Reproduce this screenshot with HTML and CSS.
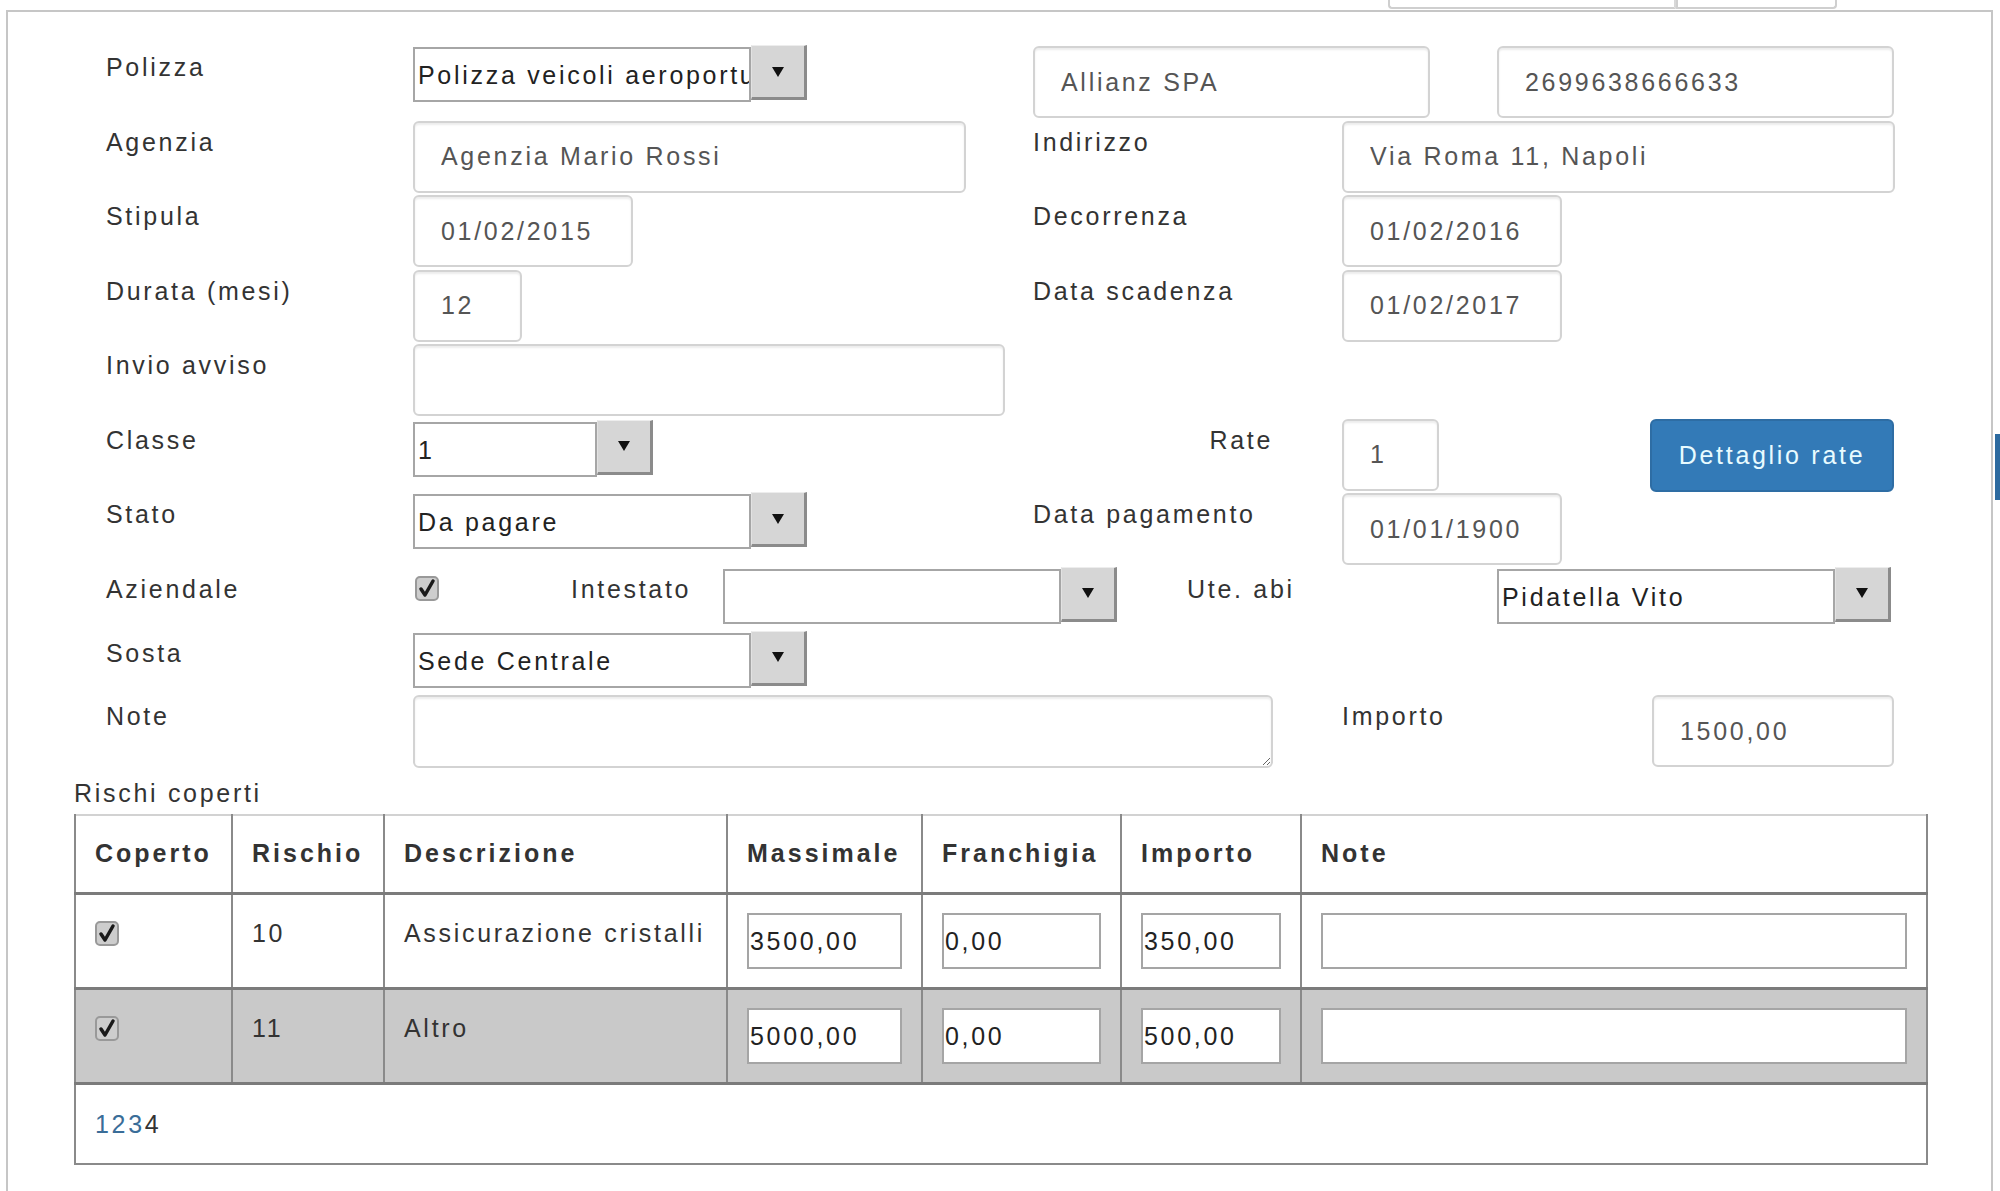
FILE: index.html
```html
<!DOCTYPE html>
<html lang="it">
<head>
    <meta charset="UTF-8">
    <title>Polizza - dettaglio</title>
    <link rel="stylesheet" href="styles.css">
</head>
<body>
    <div class="top-strip">
        <span class="top-box top-box-wide"></span>
        <span class="top-box"></span>
    </div>
    <div class="panel">
        <div class="form">
            <div class="row">
                <label class="lbl">Polizza</label>
                <div class="left-field">
                    <div class="select select-wide"><span class="select-value">Polizza veicoli aeroportuali</span><span class="select-btn"></span></div>
                </div>
                <input class="input w-md" type="text" value="Allianz SPA">
                <input class="input w-md push" type="text" value="2699638666633">
            </div>
            <div class="row">
                <label class="lbl">Agenzia</label>
                <div class="left-field">
                    <input class="input w-lg" type="text" value="Agenzia Mario Rossi">
                </div>
                <label class="right-lbl">Indirizzo</label>
                <input class="input w-lg push" type="text" value="Via Roma 11, Napoli">
            </div>
            <div class="row">
                <label class="lbl">Stipula</label>
                <div class="left-field">
                    <input class="input w-sm" type="text" value="01/02/2015">
                </div>
                <label class="right-lbl">Decorrenza</label>
                <input class="input w-sm" type="text" value="01/02/2016">
            </div>
            <div class="row">
                <label class="lbl">Durata (mesi)</label>
                <div class="left-field">
                    <input class="input w-xs" type="text" value="12">
                </div>
                <label class="right-lbl">Data scadenza</label>
                <input class="input w-sm" type="text" value="01/02/2017">
            </div>
            <div class="row">
                <label class="lbl">Invio avviso</label>
                <input class="input w-xl" type="text" value="">
            </div>
            <div class="row">
                <label class="lbl">Classe</label>
                <div class="left-field">
                    <div class="select select-narrow select-low"><span class="select-value">1</span><span class="select-btn"></span></div>
                </div>
                <label class="right-lbl align-right">Rate</label>
                <input class="input w-xxs" type="text" value="1">
                <button class="btn-primary push" type="button">Dettaglio rate</button>
            </div>
            <div class="row">
                <label class="lbl">Stato</label>
                <div class="left-field">
                    <div class="select select-wide"><span class="select-value">Da pagare</span><span class="select-btn"></span></div>
                </div>
                <label class="right-lbl">Data pagamento</label>
                <input class="input w-sm" type="text" value="01/01/1900">
            </div>
            <div class="row row-sel">
                <label class="lbl">Aziendale</label>
                <div class="check-field">
                    <svg class="check" width="24" height="25" viewBox="0 0 24 25"><rect x="1" y="1" width="22" height="23" rx="4" fill="#cdcdcd" stroke="#999" stroke-width="2"/><path d="M6 13 L10 19 L18 5" fill="none" stroke="#1a1a1a" stroke-width="3.5" stroke-linecap="round" stroke-linejoin="round"/></svg>
                </div>
                <label class="inline-lbl lbl-intestato">Intestato</label>
                <div class="select select-wide"><span class="select-value"></span><span class="select-btn"></span></div>
                <label class="inline-lbl lbl-ute">Ute. abi</label>
                <div class="select select-wide"><span class="select-value">Pidatella Vito</span><span class="select-btn"></span></div>
            </div>
            <div class="row row-sel2">
                <label class="lbl">Sosta</label>
                <div class="select select-wide"><span class="select-value">Sede Centrale</span><span class="select-btn"></span></div>
            </div>
            <div class="row">
                <label class="lbl">Note</label>
                <textarea class="input textarea"></textarea>
                <label class="inline-lbl lbl-importo">Importo</label>
                <input class="input w-amount push" type="text" value="1500,00">
            </div>
        </div>

        <div class="section-title">Rischi coperti</div>
        <table class="risks">
            <colgroup>
                <col style="width: 157px">
                <col style="width: 152px">
                <col style="width: 343px">
                <col style="width: 195px">
                <col style="width: 199px">
                <col style="width: 180px">
                <col style="width: 626px">
            </colgroup>
            <thead>
                <tr>
                    <th>Coperto</th>
                    <th>Rischio</th>
                    <th>Descrizione</th>
                    <th>Massimale</th>
                    <th>Franchigia</th>
                    <th>Importo</th>
                    <th>Note</th>
                </tr>
            </thead>
            <tbody>
                <tr>
                    <td><svg class="check" width="24" height="25" viewBox="0 0 24 25"><rect x="1" y="1" width="22" height="23" rx="4" fill="#cdcdcd" stroke="#999" stroke-width="2"/><path d="M6 13 L10 19 L18 5" fill="none" stroke="#1a1a1a" stroke-width="3.5" stroke-linecap="round" stroke-linejoin="round"/></svg></td>
                    <td>10</td>
                    <td>Assicurazione cristalli</td>
                    <td><input class="cell-input" type="text" value="3500,00"></td>
                    <td><input class="cell-input" type="text" value="0,00"></td>
                    <td><input class="cell-input" type="text" value="350,00"></td>
                    <td><input class="cell-input" type="text" value=""></td>
                </tr>
                <tr class="alt">
                    <td><svg class="check" width="24" height="25" viewBox="0 0 24 25"><rect x="1" y="1" width="22" height="23" rx="4" fill="#cdcdcd" stroke="#999" stroke-width="2"/><path d="M6 13 L10 19 L18 5" fill="none" stroke="#1a1a1a" stroke-width="3.5" stroke-linecap="round" stroke-linejoin="round"/></svg></td>
                    <td>11</td>
                    <td>Altro</td>
                    <td><input class="cell-input" type="text" value="5000,00"></td>
                    <td><input class="cell-input" type="text" value="0,00"></td>
                    <td><input class="cell-input" type="text" value="500,00"></td>
                    <td><input class="cell-input" type="text" value=""></td>
                </tr>
                <tr class="pager">
                    <td colspan="7"><a class="page-link" href="#">1</a><a class="page-link" href="#">2</a><a class="page-link" href="#">3</a><span>4</span></td>
                </tr>
            </tbody>
        </table>
    </div>
</body>
</html>
```

FILE: styles.css
```css
* {
    box-sizing: border-box;
}
body {
    margin: 0;
    font-family: "Liberation Sans", Arial, sans-serif;
    font-size: 25px;
    letter-spacing: 2.7px;
    color: #333;
    background: linear-gradient(#2c6aa0, #2c6aa0) 1995px 434px / 5px 66px no-repeat, #fff;
    overflow: hidden;
}
.top-strip {
    height: 10px;
    display: flex;
    justify-content: flex-end;
    padding-right: 163px;
}
.top-box {
    width: 161px;
    height: 9px;
    border: 2px solid #cfcfcf;
    border-top: none;
    border-radius: 0 0 4px 0;
}
.top-box-wide {
    width: 288px;
    border-right: 2px solid #d8d8d8;
    border-radius: 0 0 0 4px;
}
.panel {
    margin-left: 6px;
    width: 1987px;
    height: 1200px;
    border: 2px solid #c6c6c6;
    border-bottom: none;
    padding: 34px 0 0 66px;
    background: #fff;
}
.form {
    width: 1820px;
    padding-left: 32px;
}
.row {
    display: flex;
    align-items: flex-start;
    height: 74.5px;
}
.row-sel {
    height: 64px;
}
.row-sel2 {
    height: 63.5px;
}
.lbl, .right-lbl, .inline-lbl {
    flex: none;
    padding-top: 6px;
    line-height: 30px;
}
.lbl {
    width: 307px;
}
.left-field {
    width: 620px;
    flex: none;
}
.right-lbl {
    width: 309px;
}
.align-right {
    text-align: right;
    padding-right: 69px;
}
.push {
    margin-left: auto;
}

/* campi di testo */
.input {
    display: block;
    flex: none;
    height: 72px;
    border: 2px solid #d3d3d3;
    border-radius: 6px;
    padding: 0 26px;
    font: inherit;
    letter-spacing: inherit;
    color: #555;
    background: #fff;
    box-shadow: inset 0 2px 2px rgba(0, 0, 0, 0.075);
    outline: none;
}
.w-xxs { width: 97px; }
.w-xs { width: 109px; }
.w-sm { width: 220px; }
.w-md { width: 397px; }
.w-lg { width: 553px; }
.w-xl { width: 592px; }
.w-amount { width: 242px; }
.textarea {
    width: 860px;
    height: 73px;
    resize: both;
    padding: 8px 26px;
}

/* select */
.select {
    display: flex;
    flex: none;
    height: 55px;
    margin-top: 1px;
}
.select-low {
    margin-top: 3px;
}
.select-wide {
    width: 394px;
}
.select-narrow {
    width: 240px;
}
.select-value {
    flex: 1;
    min-width: 0;
    border: 2px solid #a6a6a6;
    background: #fff;
    color: #222;
    padding-left: 3px;
    line-height: 53px;
    white-space: nowrap;
    overflow: hidden;
}
.select-btn {
    flex: none;
    width: 56px;
    height: 55px;
    margin-top: -2px;
    background: #d6d6d6;
    border-top: 1px solid #ededed;
    border-left: 1px solid #e2e2e2;
    border-right: 3px solid #8b8b8b;
    border-bottom: 3px solid #8b8b8b;
    display: flex;
    align-items: center;
    justify-content: center;
}
.select-btn::after {
    content: "";
    border-left: 6px solid transparent;
    border-right: 6px solid transparent;
    border-top: 10px solid #111;
}

.check-field {
    width: 158px;
    flex: none;
    padding: 8px 0 0 2px;
}
.check {
    display: block;
}
.lbl-intestato {
    width: 152px;
}
.lbl-ute {
    width: 310px;
    margin-left: 70px;
}
.lbl-importo {
    width: 310px;
    margin-left: 69px;
}

.btn-primary {
    flex: none;
    width: 244px;
    height: 73px;
    background: #337ab7;
    border: 2px solid #2e6da4;
    border-radius: 6px;
    color: #e8fbff;
    font: inherit;
    letter-spacing: inherit;
    padding: 0;
}

/* rischi coperti */
.section-title {
    margin-top: 8px;
    line-height: 30px;
}
.risks {
    margin-top: 6px;
    width: 1852px;
    table-layout: fixed;
    border-collapse: collapse;
    border: 2px solid #8a8a8a;
    border-top-color: #d2d2d2;
}
.risks th {
    height: 79px;
    padding: 0 19px;
    text-align: left;
    font-weight: bold;
    letter-spacing: 3px;
    white-space: nowrap;
    border-left: 2px solid #8a8a8a;
    border-bottom: 3px solid #7b7b7b;
}
.risks td {
    padding: 18px 19px;
    line-height: 40px;
    vertical-align: top;
    white-space: nowrap;
    border-left: 2px solid #8a8a8a;
    border-bottom: 3px solid #7b7b7b;
}
.risks td .check {
    margin-top: 8px;
}
.risks .alt td {
    background: #c9c9c9;
}
.risks .pager td {
    height: 80px;
    padding: 0 19px;
    vertical-align: middle;
    border-bottom: 2px solid #8a8a8a;
}
.cell-input {
    display: block;
    width: 100%;
    height: 56px;
    border: 2px solid #a5a5a5;
    padding: 0 1px;
    font: inherit;
    letter-spacing: inherit;
    color: #222;
    background: #fff;
    outline: none;
}
.page-link {
    color: #3a6d98;
    text-decoration: none;
}
```
